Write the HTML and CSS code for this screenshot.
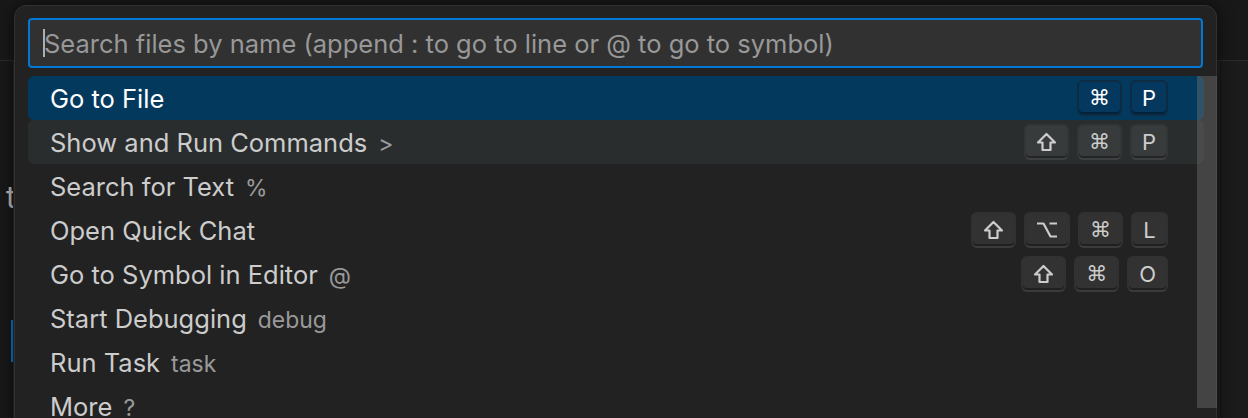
FILE: index.html
```html
<!DOCTYPE html>
<html lang="en">
<head>
<meta charset="utf-8">
<title>Quick Open</title>
<link rel="stylesheet" href="styles.css">
</head>
<body>
<div class="workbench">
  <div class="titlebar"></div>
  <div class="main">
    <div class="sidebar">
      <div class="side-text">t</div>
      <div class="side-indicator"></div>
    </div>
    <div class="editor"></div>
    <div class="right-pane"></div>
  </div>

  <div class="quick-input">
    <div class="input-box">
      <span class="caret"></span>
      <span class="placeholder">Search files by name (append : to go to line or @ to go to symbol)</span>
    </div>
    <div class="list">
      <div class="row selected">
        <span class="label">Go to File</span>
        <span class="keys"><kbd>⌘</kbd><kbd class="letter">P</kbd></span>
      </div>
      <div class="row hover">
        <span class="label">Show and Run Commands<span class="desc">&gt;</span></span>
        <span class="keys">
          <kbd><svg class="sym" width="21" height="20" viewBox="0 0 21 20"><path d="M10.5 2 L19 10.5 H14.5 V18 H6.5 V10.5 H2 Z" fill="none" stroke="currentColor" stroke-width="2.2" stroke-linejoin="round"/></svg></kbd><kbd>⌘</kbd><kbd class="letter">P</kbd>
        </span>
      </div>
      <div class="row">
        <span class="label">Search for Text<span class="desc">%</span></span>
      </div>
      <div class="row">
        <span class="label">Open Quick Chat</span>
        <span class="keys">
          <kbd><svg class="sym" width="21" height="20" viewBox="0 0 21 20"><path d="M10.5 2 L19 10.5 H14.5 V18 H6.5 V10.5 H2 Z" fill="none" stroke="currentColor" stroke-width="2.2" stroke-linejoin="round"/></svg></kbd><kbd><svg class="sym" width="22" height="20" viewBox="0 0 22 20"><path d="M1 3.5 H7.5 L14.5 16.5 H21 M13.5 3.5 H21" fill="none" stroke="currentColor" stroke-width="2.2" stroke-linejoin="round"/></svg></kbd><kbd>⌘</kbd><kbd class="letter">L</kbd>
        </span>
      </div>
      <div class="row">
        <span class="label">Go to Symbol in Editor<span class="desc">@</span></span>
        <span class="keys">
          <kbd><svg class="sym" width="21" height="20" viewBox="0 0 21 20"><path d="M10.5 2 L19 10.5 H14.5 V18 H6.5 V10.5 H2 Z" fill="none" stroke="currentColor" stroke-width="2.2" stroke-linejoin="round"/></svg></kbd><kbd>⌘</kbd><kbd class="letter">O</kbd>
        </span>
      </div>
      <div class="row">
        <span class="label">Start Debugging<span class="desc">debug</span></span>
      </div>
      <div class="row">
        <span class="label">Run Task<span class="desc">task</span></span>
      </div>
      <div class="row">
        <span class="label">More<span class="desc">?</span></span>
      </div>
      <div class="scrollbar"></div>
    </div>
  </div>
</div>
</body>
</html>
```

FILE: styles.css
```css
* { box-sizing: border-box; }

html, body {
  margin: 0;
  padding: 0;
  width: 1248px;
  height: 418px;
  overflow: hidden;
  background: #181818;
  font-family: Inter, "Noto Sans", "DejaVu Sans", sans-serif;
}

.workbench {
  position: relative;
  width: 1248px;
  height: 418px;
  display: flex;
  flex-direction: column;
}

.titlebar {
  height: 61px;
  background: #181818;
  border-bottom: 1px solid #2b2b2b;
}

.main {
  flex: 1;
  display: flex;
}

.sidebar {
  width: 14px;
  background: #181818;
  border-right: 1px solid #2b2b2b;
  display: flex;
  flex-direction: column;
  padding-top: 118px;
  overflow: hidden;
}

.side-text {
  color: #bbbbbb;
  font-size: 30px;
  line-height: 36px;
  padding-left: 6px;
  white-space: nowrap;
}

.side-indicator {
  margin-top: 105px;
  margin-left: 11px;
  width: 2px;
  height: 42px;
  background: #0078d4;
}

.editor {
  flex: 1;
  background: #1f1f1f;
}

.right-pane {
  width: 28px;
  background: #1b1b1b;
  border-left: 1px solid #141414;
}

/* quick input widget (overlay) */
.quick-input {
  position: absolute;
  left: 14px;
  top: 5px;
  width: 1203px;
  height: 440px;
  background: #222222;
  border: 1px solid #313131;
  border-radius: 12px;
  box-shadow: 0 0 16px rgba(0, 0, 0, 0.6);
  padding: 12px 0 0 13px;
  display: flex;
  flex-direction: column;
}

.input-box {
  width: 1175px;
  height: 50px;
  background: #313131;
  border: 2px solid #0078d4;
  border-radius: 4px;
  display: flex;
  align-items: center;
  padding-left: 13px;
  font-size: 25.5px;
  color: #989898;
  white-space: nowrap;
}

.caret {
  width: 2px;
  height: 28px;
  background: #aeafad;
  margin-right: -1px;
}

.list {
  position: relative;
  margin-top: 8px;
  display: flex;
  flex-direction: column;
  width: 1189px;
}

.row {
  width: 1176px;
  height: 44px;
  display: flex;
  align-items: center;
  justify-content: space-between;
  padding: 0 36px 0 22px;
  border-radius: 6px;
  color: #cccccc;
  font-size: 25.5px;
  white-space: nowrap;
}

.row.selected {
  background: #04395e;
  color: #ffffff;
}

.row.hover {
  background: #2a2d2e;
}

.desc {
  margin-left: 11px;
  font-size: 0.9em;
  opacity: 0.7;
}

.keys {
  display: flex;
  gap: 8px;
}

kbd {
  display: flex;
  align-items: center;
  justify-content: center;
  font-family: "DejaVu Sans", sans-serif;
  font-size: 21px;
  height: 36px;
  padding: 0 10px;
  background: rgba(128, 128, 128, 0.17);
  border: 2px solid rgba(51, 51, 51, 0.6);
  border-bottom-color: rgba(68, 68, 68, 0.6);
  border-radius: 6px;
  box-shadow: inset 0 -2px 0 rgba(0, 0, 0, 0.36);
  color: #cccccc;
}

kbd.letter {
  font-family: Inter, "Noto Sans", sans-serif;
  font-size: 22px;
  padding: 0 10px;
  min-width: 37px;
}

.sym {
  display: block;
}

.selected kbd {
  background: rgba(4, 57, 94, 0.9);
  border-color: rgba(20, 35, 48, 0.6);
  color: #ffffff;
}

.scrollbar {
  position: absolute;
  right: 0;
  top: 0;
  width: 20px;
  height: 332px;
  background: rgba(121, 121, 121, 0.4);
}
```
